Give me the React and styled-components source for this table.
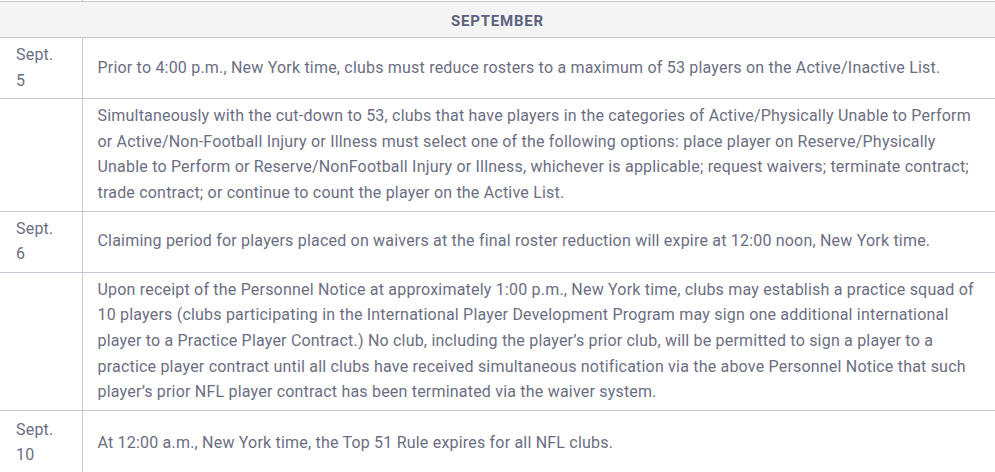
import React from 'react';
import styled, { createGlobalStyle } from 'styled-components';

const GlobalStyle = createGlobalStyle`
  html, body {
    margin: 0;
    padding: 0;
    background: #fff;
  }
  body {
    font-family: Roboto, "Liberation Sans", sans-serif;
    overflow: hidden;
  }
`;

const Table = styled.table`
  width: 995px;
  border-collapse: collapse;
  table-layout: fixed;
  color: #6b6e82;
  font-size: 16px;
  line-height: 25.6px;
  letter-spacing: 0.2px;
`;

const StubRow = styled.tr`
  height: 1px;
  td {
    padding: 0;
    height: 1px;
    line-height: 0;
    font-size: 0;
  }
  td:first-child {
    border-right: 1px solid #c8c6d4;
  }
`;

const Row = styled.tr`
  &:last-child td {
    border-bottom: none;
    padding-top: 6px;
    padding-bottom: 8px;
  }
`;

const HeadCell = styled.th`
  background: #f4f4f4;
  border-top: 1px solid #c8c6d4;
  border-bottom: 1px solid #c8c6d4;
  height: 32px;
  padding: 3px 0 0;
  line-height: 32px;
  font-size: 15px;
  font-weight: 700;
  color: #5d6280;
  text-align: center;
  letter-spacing: 0.8px;
`;

const DateCell = styled.td`
  padding: 4px 6px 5px 16px;
  border-right: 1px solid #c8c6d4;
  border-bottom: 1px solid #c8c6d4;
  vertical-align: top;
`;

const TextCell = styled.td`
  padding: 4px 10px 5px 15px;
  border-bottom: 1px solid #c8c6d4;
  vertical-align: middle;
`;

const rows = [
  {
    date: ['Sept.', '5'],
    text: 'Prior to 4:00 p.m., New York time, clubs must reduce rosters to a maximum of 53 players on the Active/Inactive List.',
  },
  {
    text: 'Simultaneously with the cut-down to 53, clubs that have players in the categories of Active/Physically Unable to Perform or Active/Non-Football Injury or Illness must select one of the following options: place player on Reserve/Physically Unable to Perform or Reserve/NonFootball Injury or Illness, whichever is applicable; request waivers; terminate contract; trade contract; or continue to count the player on the Active List.',
  },
  {
    date: ['Sept.', '6'],
    text: 'Claiming period for players placed on waivers at the final roster reduction will expire at 12:00 noon, New York time.',
  },
  {
    text: 'Upon receipt of the Personnel Notice at approximately 1:00 p.m., New York time, clubs may establish a practice squad of 10 players (clubs participating in the International Player Development Program may sign one additional international player to a Practice Player Contract.) No club, including the player\u2019s prior club, will be permitted to sign a player to a practice player contract until all clubs have received simultaneous notification via the above Personnel Notice that such player\u2019s prior NFL player contract has been terminated via the waiver system.',
  },
  {
    date: ['Sept.', '10'],
    text: 'At 12:00 a.m., New York time, the Top 51 Rule expires for all NFL clubs.',
  },
];

export default function App() {
  return (
    <>
      <GlobalStyle />
      <Table>
        <colgroup>
          <col style={{ width: 82 }} />
          <col />
        </colgroup>
        <tbody>
          <StubRow>
            <td />
            <td />
          </StubRow>
          <tr>
            <HeadCell colSpan={2}>SEPTEMBER</HeadCell>
          </tr>
          {rows.map((r, i) => (
            <Row key={i}>
              <DateCell>
                {r.date && (
                  <>
                    {r.date[0]}
                    <br />
                    {r.date[1]}
                  </>
                )}
              </DateCell>
              <TextCell>{r.text}</TextCell>
            </Row>
          ))}
        </tbody>
      </Table>
    </>
  );
}
